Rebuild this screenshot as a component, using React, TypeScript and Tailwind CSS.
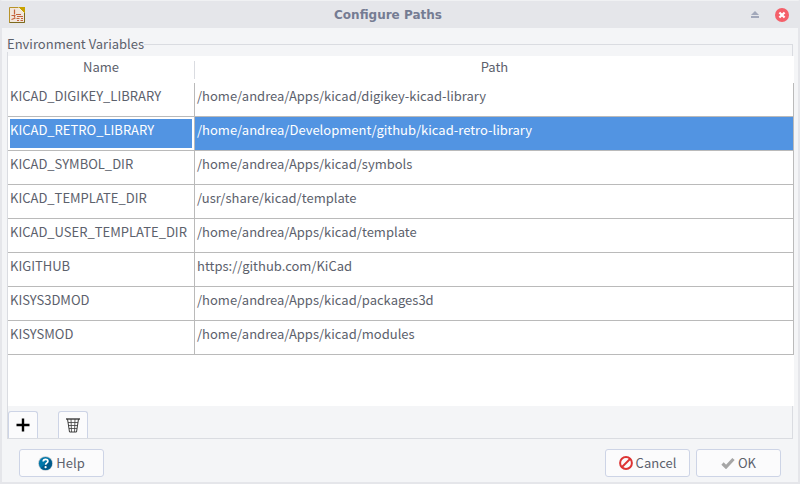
import React from "react";

const variables = [
  { name: "KICAD_DIGIKEY_LIBRARY", path: "/home/andrea/Apps/kicad/digikey-kicad-library" },
  { name: "KICAD_RETRO_LIBRARY", path: "/home/andrea/Development/github/kicad-retro-library", selected: true },
  { name: "KICAD_SYMBOL_DIR", path: "/home/andrea/Apps/kicad/symbols" },
  { name: "KICAD_TEMPLATE_DIR", path: "/usr/share/kicad/template" },
  { name: "KICAD_USER_TEMPLATE_DIR", path: "/home/andrea/Apps/kicad/template" },
  { name: "KIGITHUB", path: "https://github.com/KiCad" },
  { name: "KISYS3DMOD", path: "/home/andrea/Apps/kicad/packages3d" },
  { name: "KISYSMOD", path: "/home/andrea/Apps/kicad/modules" },
];

function AppIcon() {
  return (
    <svg width="16" height="16" viewBox="0 0 16 16" aria-hidden="true">
      <path d="M0.500 0.500h10l5 5v10h-15z" fill="#f1e6dc" stroke="#b8932a" />
      <path d="M9.500 0h6.500v6.500z" fill="#c9a200" />
      <path d="M9.500 0.500l6 6" stroke="#f6efd8" />
      <path d="M15.500 6v9.500h-15" fill="none" stroke="#7d6a1e" />
      <path d="M5.500 2.500v5M2.500 8.500h4M5.500 8.500v2M2.500 12.500l4-1.500M7 7.500h5M8 9.500h6M7.500 11.500h3M12 11.500h2M8 13.500h2M11.500 13.500h2.500" fill="none" stroke="#c4623c" strokeWidth="1.200" />
    </svg>
  );
}

function ShadeIcon() {
  return (
    <svg width="8" height="7" viewBox="0 0 8 7" aria-hidden="true">
      <path d="M4 0L8 4H0zM0 5h8v2H0z" fill="#a2a8ba" />
    </svg>
  );
}

function CloseIcon() {
  return (
    <svg width="14" height="14" viewBox="0 0 14 14" aria-hidden="true">
      <circle cx="7" cy="7" r="7" fill="#f4606a" />
      <path d="M5.200 5.200l3.600 3.600M8.800 5.200l-3.600 3.600" stroke="#fff" strokeWidth="2.200" strokeLinecap="square" />
    </svg>
  );
}

function PlusIcon() {
  return (
    <svg width="14" height="14" viewBox="0 0 14 14" aria-hidden="true">
      <path d="M7 0.500v13M0.500 7h13" stroke="#000" strokeWidth="2.400" />
    </svg>
  );
}

function TrashIcon() {
  return (
    <svg width="14" height="15" viewBox="0 0 14 15" aria-hidden="true" fill="none" stroke="#3c3c3c">
      <path d="M0 1h14" strokeWidth="1.400" />
      <path d="M1.500 1l2 13h7l2-13" strokeWidth="1" />
      <path d="M5 1l.5 13M9 1l-.5 13M2 4.500h10M2.500 7.500h9M3 10.500h8" strokeWidth="0.800" />
    </svg>
  );
}

function HelpIcon() {
  return (
    <svg width="15" height="15" viewBox="0 0 15 15" aria-hidden="true">
      <circle cx="7.500" cy="7.500" r="7.300" fill="#b9c3ca" />
      <circle cx="7.500" cy="7.500" r="6.600" fill="#0077aa" />
      <path d="M12.100 2.900a6.500 6.500 0 0 1-9.200 9.200z" fill="#00598a" />
      <path d="M5.200 5.600c0-3 4.700-3 4.700-.3 0 1.600-2.300 1.700-2.300 3.500" fill="none" stroke="#fff" strokeWidth="1.700" />
      <circle cx="7.600" cy="11.200" r="1.100" fill="#fff" />
    </svg>
  );
}

function CancelIcon() {
  return (
    <svg width="14" height="14" viewBox="0 0 14 14" aria-hidden="true" fill="none" stroke="#dd3434" strokeWidth="2">
      <circle cx="7" cy="7" r="5.900" />
      <path d="M3 11l8-8" />
    </svg>
  );
}

function OkIcon() {
  return (
    <svg width="14" height="12" viewBox="0 0 14 12" aria-hidden="true">
      <path d="M1.500 6.500l3.500 3.500l7.500-8" fill="none" stroke="#a6a6a6" strokeWidth="3.200" />
    </svg>
  );
}

function DialogButton({ icon, children }: { icon: React.ReactNode; children: string }) {
  return (
    <button
      type="button"
      className="flex h-7 w-[85px] items-center justify-center gap-[3px] rounded-[3px] border border-[#cdd4e6] bg-[#fbfbfc]"
    >
      {icon}
      {children}
    </button>
  );
}

function ToolButton({ label, children }: { label: string; children: React.ReactNode }) {
  return (
    <button
      type="button"
      aria-label={label}
      className="flex h-[27px] w-[30px] items-center justify-center rounded-t-[3px] border border-b-0 border-[#cdd4e6] bg-[#fbfbfc]"
    >
      {children}
    </button>
  );
}

export default function App() {
  return (
    <div className="flex min-h-screen flex-col border-x-2 border-b-2 border-t border-x-[#e5e6ea] border-b-[#e5e6ea] border-t-[#f0f1f3] bg-[#f4f5f7] font-['Noto_Sans_CJK_SC','Noto_Sans',sans-serif] text-[13px] leading-5 text-[#5c616c]">
      <header className="flex h-[27px] items-center bg-[#e5e6ea] px-[7px]">
        <AppIcon />
        <h1 className="flex-1 text-center font-['DejaVu_Sans',sans-serif] text-[12px] leading-4 font-bold text-[#757c93]">
          Configure Paths
        </h1>
        <div className="flex items-center gap-4 pr-0.5">
          <button type="button" aria-label="Shade window">
            <ShadeIcon />
          </button>
          <button type="button" aria-label="Close window">
            <CloseIcon />
          </button>
        </div>
      </header>

      <main className="flex flex-1 flex-col px-[5px] pt-2">
        <fieldset className="flex flex-1 flex-col border border-[#dadce1]">
          <legend className="-ml-px bg-[#f4f5f7] leading-4">Environment Variables</legend>
          <div className="-mr-0.5 mt-1 min-h-[350px] flex-1 bg-white">
            <table className="w-full table-fixed border-separate border-spacing-0">
              <colgroup>
                <col className="w-[187px]" />
                <col />
              </colgroup>
              <thead>
                <tr className="h-[27px]">
                  <th scope="col" className="p-0 font-normal">
                    <div className="my-1 h-[18px] border-r border-[#dadce1] leading-3">Name</div>
                  </th>
                  <th scope="col" className="p-0 font-normal">
                    <div className="my-1 h-[18px] leading-3">Path</div>
                  </th>
                </tr>
              </thead>
              <tbody>
                {variables.map((v) => (
                  <tr key={v.name} aria-selected={!!v.selected} className={v.selected ? "h-[34px] text-white" : "h-[34px]"}>
                    <td className="border-b border-r border-[#bababa] p-0.5 align-top">
                      <div className={v.selected ? "h-[29px] bg-[#5294e2] leading-[22px]" : "h-[29px] leading-[22px]"}>{v.name}</div>
                    </td>
                    <td
                      className={
                        v.selected
                          ? "border-b border-r border-[#bababa] bg-[#5294e2] p-0.5 align-top leading-[22px]"
                          : "border-b border-r border-[#bababa] p-0.5 align-top leading-[22px]"
                      }
                    >
                      {v.path}
                    </td>
                  </tr>
                ))}
              </tbody>
            </table>
          </div>
          <div className="flex gap-5 pt-[5px]">
            <ToolButton label="Add variable">
              <PlusIcon />
            </ToolButton>
            <ToolButton label="Delete variable">
              <TrashIcon />
            </ToolButton>
          </div>
        </fieldset>

        <footer className="flex items-center gap-1.5 px-3 pb-[5px] pt-2.5">
          <DialogButton icon={<HelpIcon />}>Help</DialogButton>
          <div className="flex-1" />
          <DialogButton icon={<CancelIcon />}>Cancel</DialogButton>
          <DialogButton icon={<OkIcon />}>OK</DialogButton>
        </footer>
      </main>
    </div>
  );
}
